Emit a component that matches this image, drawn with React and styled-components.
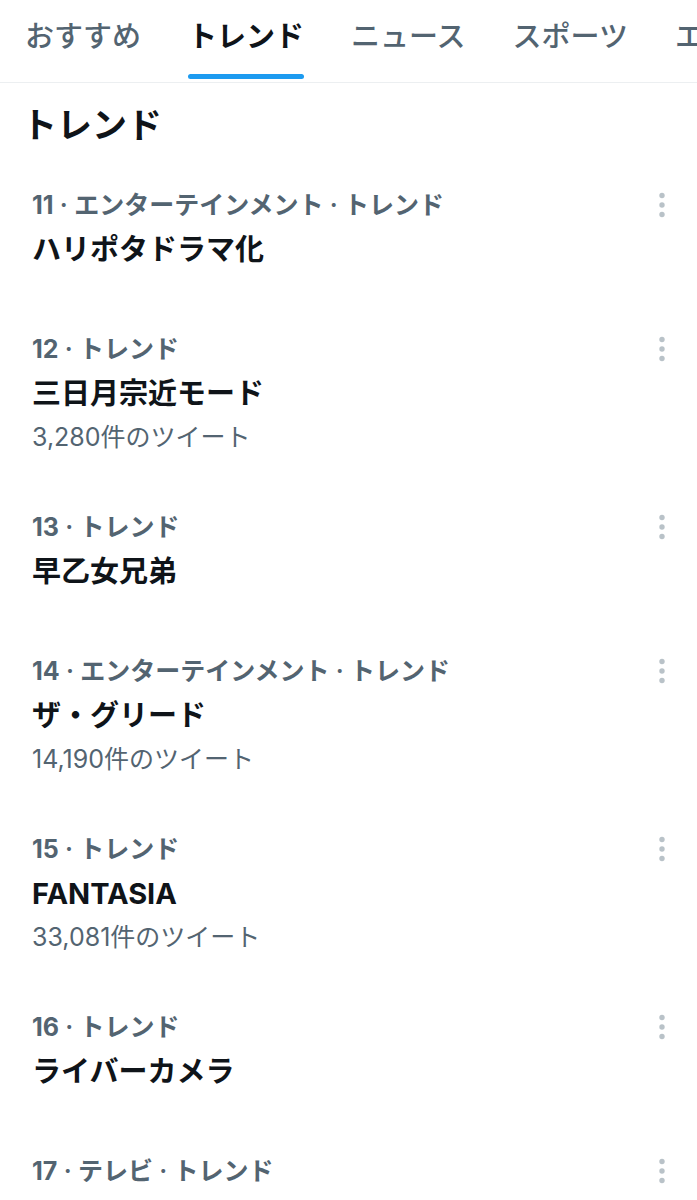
import React from "react";
import styled, { createGlobalStyle } from "styled-components";

const GlobalStyle = createGlobalStyle`
  body {
    margin: 0;
    background: #ffffff;
    font-family: Inter, "Noto Sans CJK JP", sans-serif;
    color: #0f1419;
  }
`;

const Root = styled.div`
  width: 697px;
  height: 1200px;
  overflow: hidden;
  background: #ffffff;
`;

const TabBar = styled.div`
  display: flex;
  gap: 47px;
  padding-left: 25px;
  height: 82px;
  border-bottom: 1px solid #eceff1;
  overflow: hidden;
  white-space: nowrap;
`;

const Tab = styled.div`
  display: flex;
  flex-direction: column;
  flex-shrink: 0;
  padding-top: 20px;
`;

const TabLabel = styled.span`
  font-size: 29px;
  line-height: 34px;
  font-weight: ${(p) => (p.$active ? 700 : 500)};
  color: ${(p) => (p.$active ? "#0f1419" : "#536471")};
`;

const Indicator = styled.div`
  margin-top: auto;
  margin-bottom: 3px;
  height: 5px;
  border-radius: 3px;
  background: ${(p) => (p.$active ? "#1d9bf0" : "transparent")};
`;

const Heading = styled.h2`
  margin: 0;
  padding: 24px 22px 16px;
  font-size: 35px;
  line-height: 36px;
  font-weight: 700;
  color: #0f1419;
`;

const Item = styled.div`
  display: flex;
  align-items: flex-start;
  padding: 27px 30px 27px 32px;
`;

const ItemBody = styled.div`
  flex: 1;
  display: flex;
  flex-direction: column;
`;

const Meta = styled.div`
  font-size: 25px;
  line-height: 38px;
  font-weight: 600;
  color: #536471;
`;

const Rank = styled.span`
  font-weight: 700;
`;

const Title = styled.div`
  font-size: 29px;
  line-height: 52px;
  font-weight: 700;
  color: #0f1419;
`;

const Count = styled.div`
  font-size: 25px;
  line-height: 34px;
  color: #536471;
`;

const MoreButton = styled.div`
  width: 10px;
  height: 38px;
  display: flex;
  align-items: center;
  justify-content: center;
  color: #b9c2c8;
`;

const MoreIcon = () => (
  <svg width="8" height="26" viewBox="0 0 8 26" fill="currentColor">
    <circle cx="4" cy="3.5" r="2.7" />
    <circle cx="4" cy="13" r="2.7" />
    <circle cx="4" cy="22.5" r="2.7" />
  </svg>
);

const tabs = ["おすすめ", "トレンド", "ニュース", "スポーツ", "エンターテインメント"];

const trends = [
  { rank: 11, category: "エンターテインメント · トレンド", title: "ハリポタドラマ化" },
  { rank: 12, category: "トレンド", title: "三日月宗近モード", count: "3,280件のツイート" },
  { rank: 13, category: "トレンド", title: "早乙女兄弟" },
  { rank: 14, category: "エンターテインメント · トレンド", title: "ザ・グリード", count: "14,190件のツイート" },
  { rank: 15, category: "トレンド", title: "FANTASIA", count: "33,081件のツイート" },
  { rank: 16, category: "トレンド", title: "ライバーカメラ" },
  { rank: 17, category: "テレビ · トレンド", title: "" },
];

const App = () => (
  <Root>
    <GlobalStyle />
    <TabBar>
      {tabs.map((tab) => (
        <Tab key={tab}>
          <TabLabel $active={tab === "トレンド"}>{tab}</TabLabel>
          <Indicator $active={tab === "トレンド"} />
        </Tab>
      ))}
    </TabBar>
    <Heading>トレンド</Heading>
    {trends.map((trend) => (
      <Item key={trend.rank}>
        <ItemBody>
          <Meta>
            <Rank>{trend.rank}</Rank> · {trend.category}
          </Meta>
          {trend.title && <Title>{trend.title}</Title>}
          {trend.count && <Count>{trend.count}</Count>}
        </ItemBody>
        <MoreButton>
          <MoreIcon />
        </MoreButton>
      </Item>
    ))}
  </Root>
);

export default App;
